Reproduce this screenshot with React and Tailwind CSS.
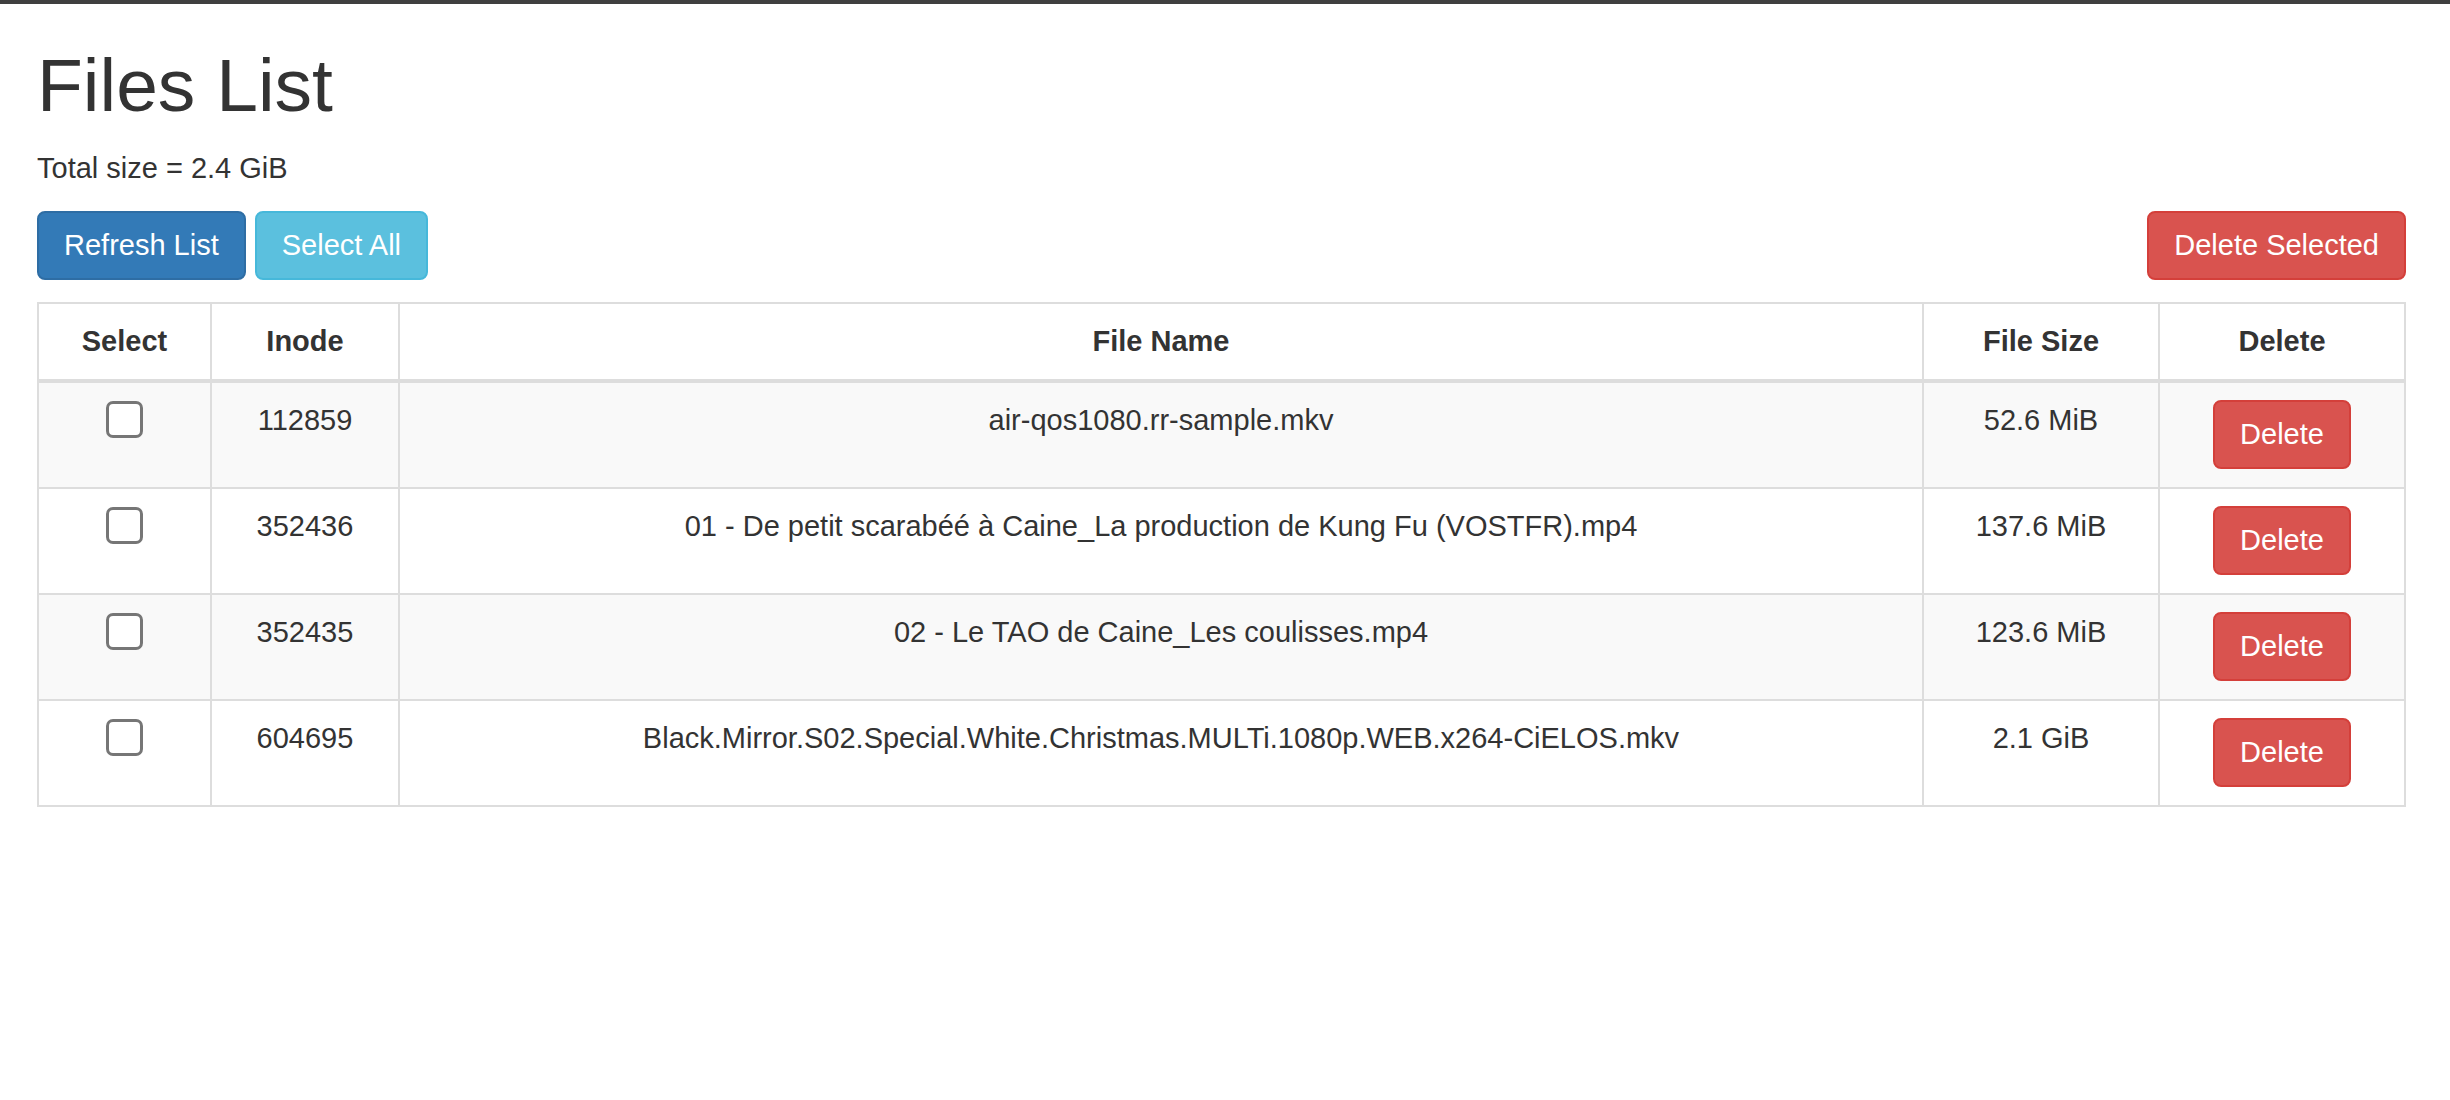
import React from 'react';

const files = [
  { inode: '112859', name: 'air-qos1080.rr-sample.mkv', size: '52.6 MiB' },
  { inode: '352436', name: '01 - De petit scarabéé à Caine_La production de Kung Fu (VOSTFR).mp4', size: '137.6 MiB' },
  { inode: '352435', name: '02 - Le TAO de Caine_Les coulisses.mp4', size: '123.6 MiB' },
  { inode: '604695', name: 'Black.Mirror.S02.Special.White.Christmas.MULTi.1080p.WEB.x264-CiELOS.mkv', size: '2.1 GiB' },
];

const btn = 'h-[69px] px-[25px] border-2 rounded-[8px] text-white text-[29px] leading-[41px]';

const App = () => {
  return (
    <div className="min-h-screen bg-white text-[#333]" style={{ fontFamily: '"Liberation Sans", Arial, sans-serif' }}>
      <div className="h-[4px] bg-[#3f3f3f]" />
      <div className="pl-[37px] pr-[44px]">
        <h1 className="mt-[40px] mb-[21px] text-[75px] leading-[1.1] font-normal">Files List</h1>
        <p className="text-[29px] leading-[41px] mb-[22px]">Total size = 2.4 GiB</p>

        <div className="flex justify-between">
          <div className="flex gap-[9px]">
            <button className={`${btn} bg-[#337ab7] border-[#2e6da4]`}>Refresh List</button>
            <button className={`${btn} bg-[#5bc0de] border-[#46b8da]`}>Select All</button>
          </div>
          <button className={`${btn} bg-[#d9534f] border-[#d43f3a]`}>Delete Selected</button>
        </div>

        <table className="mt-[22px] w-full table-fixed border-collapse text-[29px] leading-[41px]">
          <colgroup>
            <col className="w-[173px]" />
            <col className="w-[188px]" />
            <col />
            <col className="w-[236px]" />
            <col className="w-[246px]" />
          </colgroup>
          <thead>
            <tr>
              {['Select', 'Inode', 'File Name', 'File Size', 'Delete'].map((h) => (
                <th key={h} className="border-2 border-b-4 border-[#ddd] py-[17px] px-[16px] text-center font-bold align-bottom">
                  {h}
                </th>
              ))}
            </tr>
          </thead>
          <tbody>
            {files.map((f, i) => (
              <tr key={f.inode} className={i % 2 === 0 ? 'bg-[#f9f9f9]' : 'bg-white'}>
                <td className="border-2 border-[#ddd] py-[17px] px-[16px] align-top">
                  <div className="mx-auto mt-[1px] w-[37px] h-[37px] rounded-[7px] border-[3px] border-[#767676] bg-white" />
                </td>
                <td className="border-2 border-[#ddd] py-[17px] px-[16px] text-center align-top">{f.inode}</td>
                <td className="border-2 border-[#ddd] py-[17px] px-[16px] text-center align-top">{f.name}</td>
                <td className="border-2 border-[#ddd] py-[17px] px-[16px] text-center align-top">{f.size}</td>
                <td className="border-2 border-[#ddd] pt-[17px] pb-[18px] px-[16px] text-center align-top">
                  <button className={`${btn} bg-[#d9534f] border-[#d43f3a]`}>Delete</button>
                </td>
              </tr>
            ))}
          </tbody>
        </table>
      </div>
    </div>
  );
};

export default App;
